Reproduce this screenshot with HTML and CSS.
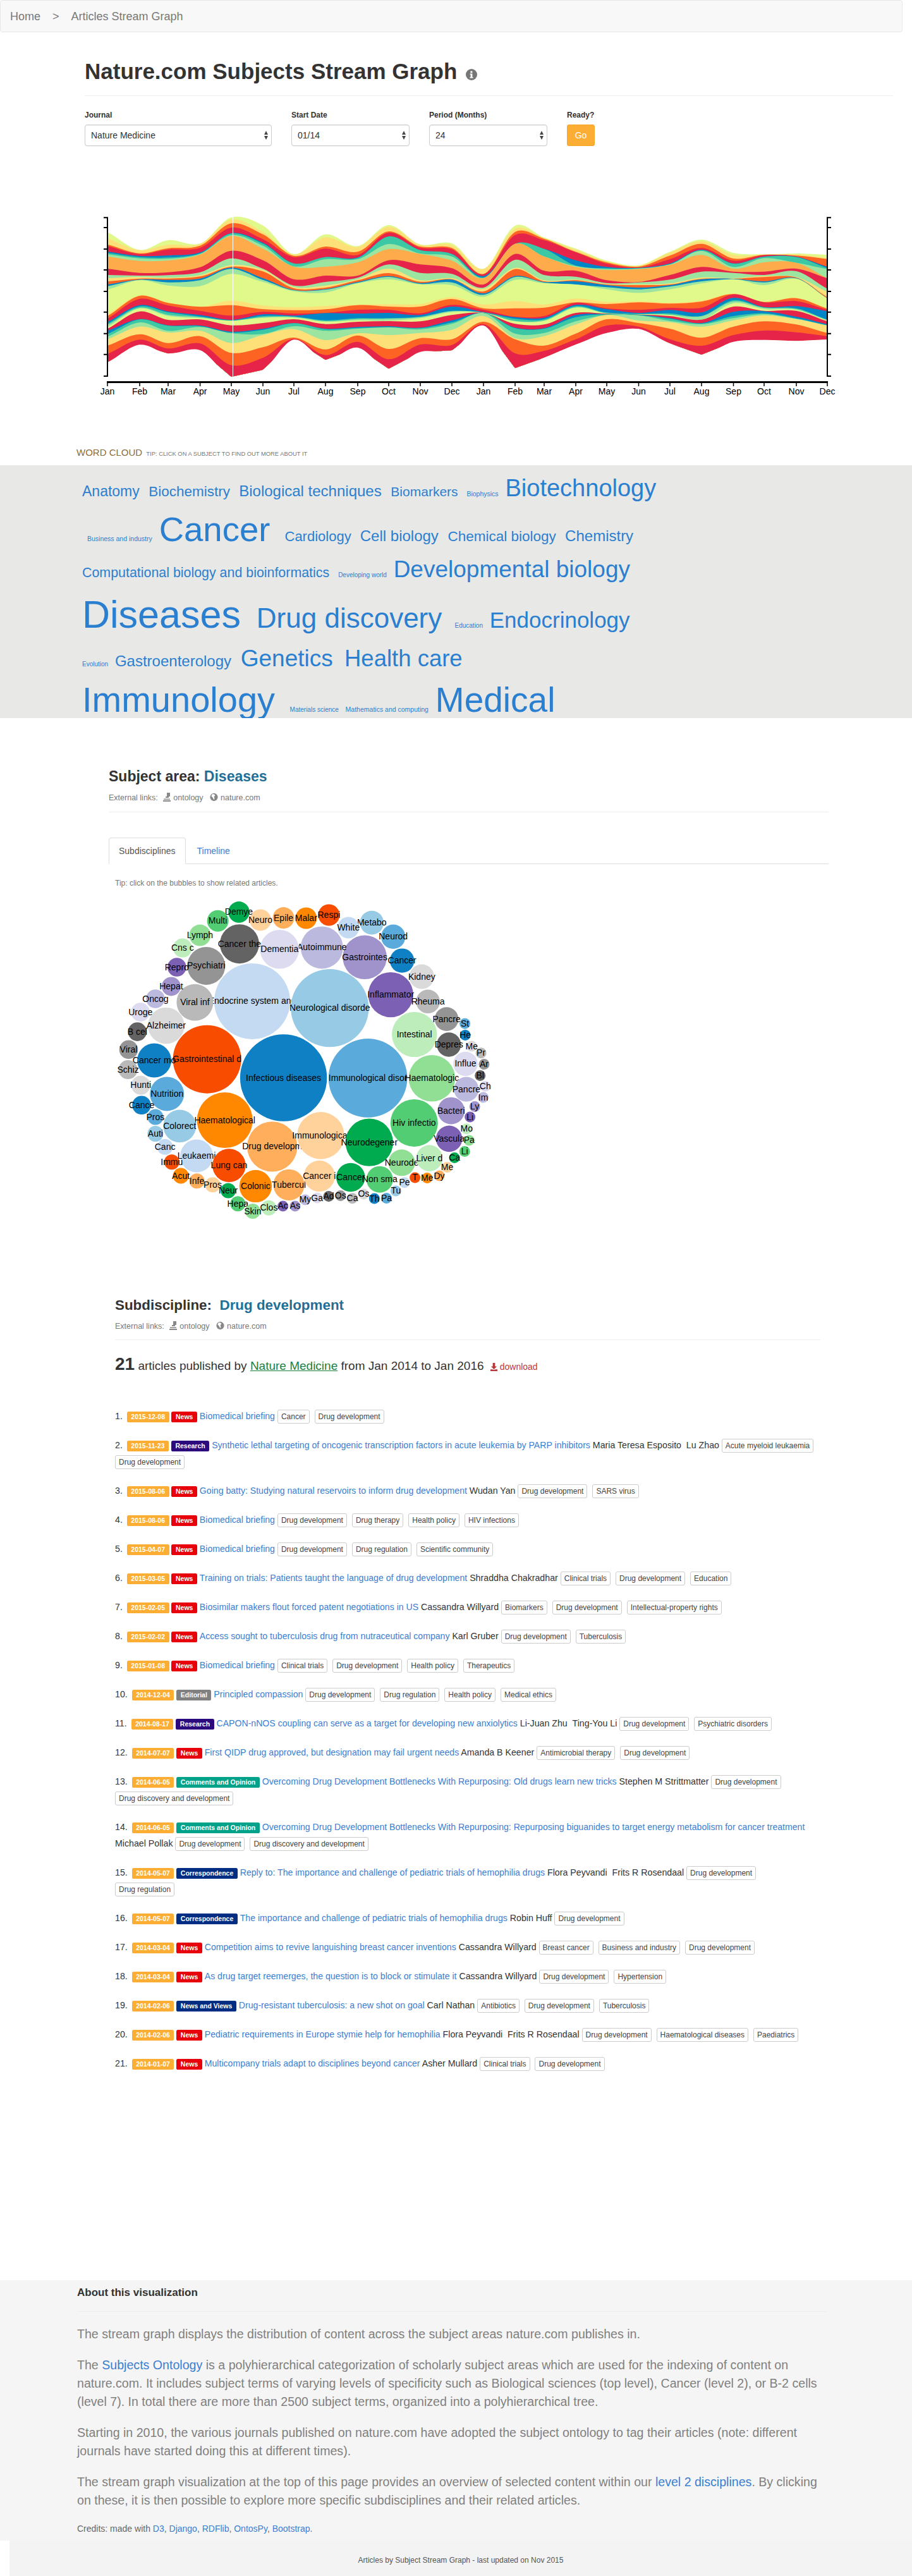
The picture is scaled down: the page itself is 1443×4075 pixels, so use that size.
FILE: index.html
```html
<!DOCTYPE html>
<html lang="en">
<head>
<meta charset="utf-8">
<title>Nature.com Subjects Stream Graph</title>
<link rel="stylesheet" href="styles.css">
</head>
<body>
<nav class="crumbs"><a>Home</a><span class="crumb-sep">&gt;</span><a>Articles Stream Graph</a></nav>

<header class="top">
  <h1 class="page-title">Nature.com Subjects Stream Graph
    <svg class="info-icon" viewBox="0 0 18 18" width="18" height="18"><circle cx="9" cy="9" r="9" fill="#777"/><path d="M7.4 3.6h3v2.6h-3zM6.6 7.4h3.8v5.6h1.2v1.6H6.4V13h1.2V9H6.6z" fill="#fff"/></svg>
  </h1>
  <form class="controls">
    <div class="field"><label class="field-label">Journal</label>
      <div class="select select-wide">Nature Medicine<svg class="updown" viewBox="0 0 8 16" width="8" height="16"><path d="M4 1l3 6H1zM4 15l3-6H1z" fill="#444"/></svg></div></div>
    <div class="field"><label class="field-label">Start Date</label>
      <div class="select">01/14<svg class="updown" viewBox="0 0 8 16" width="8" height="16"><path d="M4 1l3 6H1zM4 15l3-6H1z" fill="#444"/></svg></div></div>
    <div class="field"><label class="field-label">Period (Months)</label>
      <div class="select">24<svg class="updown" viewBox="0 0 8 16" width="8" height="16"><path d="M4 1l3 6H1zM4 15l3-6H1z" fill="#444"/></svg></div></div>
    <div class="field"><label class="field-label">Ready?</label>
      <button class="go" type="button">Go</button></div>
  </form>
  <svg id="stream" class="stream" viewBox="134 335 1200 300" width="1200" height="300"></svg>
</header>

<h4 class="cloud-title">WORD CLOUD <small class="cloud-tip">TIP: CLICK ON A SUBJECT TO FIND OUT MORE ABOUT IT</small></h4>
<section class="cloud">
  <div class="cloud-row r1"><a class="w23">Anatomy </a><a class="w225">Biochemistry </a><a class="w24">Biological techniques </a><a class="w21">Biomarkers </a><a class="w105">Biophysics </a><a class="w38">Biotechnology </a></div>
  <div class="cloud-row r2"><a class="w105">Business and industry </a><a class="w545">Cancer </a><a class="w22">Cardiology </a><a class="w24">Cell biology </a><a class="w225">Chemical biology </a><a class="w24">Chemistry </a></div>
  <div class="cloud-row r3"><a class="w215">Computational biology and bioinformatics </a><a class="w10">Developing world </a><a class="w37">Developmental biology </a></div>
  <div class="cloud-row r4"><a class="w61">Diseases </a><a class="w44">Drug discovery </a><a class="w10">Education </a><a class="w35">Endocrinology </a></div>
  <div class="cloud-row r5"><a class="w10">Evolution </a><a class="w24">Gastroenterology </a><a class="w37">Genetics </a><a class="w365">Health care </a></div>
  <div class="cloud-row r6"><a class="w56">Immunology </a><a class="w10">Materials science </a><a class="w105">Mathematics and computing </a><a class="w55">Medical </a></div>
</section>

<section class="subject">
  <h3 class="sub-title">Subject area: <a class="sub-link">Diseases</a></h3>
  <p class="ext-links">External links:
    <svg class="ico ico-first" viewBox="0 0 12 14" width="12" height="14"><path d="M6 0h5v6H9v2H4V6h2zM1 9.5h10V11H1zM0 12h12v2H0z" fill="#888"/></svg><a class="ext">ontology</a>
    <svg class="ico" viewBox="0 0 14 14" width="13" height="14"><circle cx="7" cy="7" r="6.6" fill="#888"/><path d="M5 1.5l3 1 1 2-2 1.5 1 2.5-1 3-1.5-2.5-1-2-2-1.5 1-2.5z" fill="#fff"/></svg><a class="ext">nature.com</a></p>
  <hr class="rule">
  <ul class="tabs"><li class="tab tab-active">Subdisciplines</li><li class="tab"><a>Timeline</a></li></ul>
  <p class="bubble-tip">Tip: click on the bubbles to show related articles.</p>
  <svg id="bubbles" class="bubbles" viewBox="172 1410 640 530" width="640" height="530"></svg>
</section>

<section class="articles">
  <h3 class="sub-title sub-title-alt">Subdiscipline: &nbsp;<a class="sub-link">Drug development</a></h3>
  <p class="ext-links">External links:
    <svg class="ico ico-first" viewBox="0 0 12 14" width="12" height="14"><path d="M6 0h5v6H9v2H4V6h2zM1 9.5h10V11H1zM0 12h12v2H0z" fill="#888"/></svg><a class="ext">ontology</a>
    <svg class="ico" viewBox="0 0 14 14" width="13" height="14"><circle cx="7" cy="7" r="6.6" fill="#888"/><path d="M5 1.5l3 1 1 2-2 1.5 1 2.5-1 3-1.5-2.5-1-2-2-1.5 1-2.5z" fill="#fff"/></svg><a class="ext">nature.com</a></p>
  <hr class="rule">
  <p class="count"><strong class="count-num">21</strong> articles published by <a class="journal">Nature Medicine</a> from Jan 2014 to Jan 2016 <a class="download"><svg class="dl-icon" viewBox="0 0 12 14" width="11" height="13"><path d="M4 0h4v6h3L6 11 1 6h3zM0 11h3l3 1 3-1h3v3H0z" fill="#b8383b"/></svg> download</a></p>

  <ol class="items">
    <li class="item"><span class="num">1.</span> <span class="lab date">2015-12-08</span> <span class="lab news">News</span> <a class="t">Biomedical briefing</a> <span class="tag">Cancer</span> <span class="tag">Drug development</span></li>
    <li class="item"><span class="num">2.</span> <span class="lab date">2015-11-23</span> <span class="lab research">Research</span> <a class="t">Synthetic lethal targeting of oncogenic transcription factors in acute leukemia by PARP inhibitors</a> Maria Teresa Esposito &nbsp;Lu Zhao <span class="tag">Acute myeloid leukaemia</span> <span class="tag">Drug development</span></li>
    <li class="item"><span class="num">3.</span> <span class="lab date">2015-08-06</span> <span class="lab news">News</span> <a class="t">Going batty: Studying natural reservoirs to inform drug development</a> Wudan Yan <span class="tag">Drug development</span> <span class="tag">SARS virus</span></li>
    <li class="item"><span class="num">4.</span> <span class="lab date">2015-08-06</span> <span class="lab news">News</span> <a class="t">Biomedical briefing</a> <span class="tag">Drug development</span> <span class="tag">Drug therapy</span> <span class="tag">Health policy</span> <span class="tag">HIV infections</span></li>
    <li class="item"><span class="num">5.</span> <span class="lab date">2015-04-07</span> <span class="lab news">News</span> <a class="t">Biomedical briefing</a> <span class="tag">Drug development</span> <span class="tag">Drug regulation</span> <span class="tag">Scientific community</span></li>
    <li class="item"><span class="num">6.</span> <span class="lab date">2015-03-05</span> <span class="lab news">News</span> <a class="t">Training on trials: Patients taught the language of drug development</a> Shraddha Chakradhar <span class="tag">Clinical trials</span> <span class="tag">Drug development</span> <span class="tag">Education</span></li>
    <li class="item"><span class="num">7.</span> <span class="lab date">2015-02-05</span> <span class="lab news">News</span> <a class="t">Biosimilar makers flout forced patent negotiations in US</a> Cassandra Willyard <span class="tag">Biomarkers</span> <span class="tag">Drug development</span> <span class="tag">Intellectual-property rights</span></li>
    <li class="item"><span class="num">8.</span> <span class="lab date">2015-02-02</span> <span class="lab news">News</span> <a class="t">Access sought to tuberculosis drug from nutraceutical company</a> Karl Gruber <span class="tag">Drug development</span> <span class="tag">Tuberculosis</span></li>
    <li class="item"><span class="num">9.</span> <span class="lab date">2015-01-08</span> <span class="lab news">News</span> <a class="t">Biomedical briefing</a> <span class="tag">Clinical trials</span> <span class="tag">Drug development</span> <span class="tag">Health policy</span> <span class="tag">Therapeutics</span></li>
    <li class="item"><span class="num">10.</span> <span class="lab date">2014-12-04</span> <span class="lab editorial">Editorial</span> <a class="t">Principled compassion</a> <span class="tag">Drug development</span> <span class="tag">Drug regulation</span> <span class="tag">Health policy</span> <span class="tag">Medical ethics</span></li>
    <li class="item"><span class="num">11.</span> <span class="lab date">2014-08-17</span> <span class="lab research">Research</span> <a class="t">CAPON-nNOS coupling can serve as a target for developing new anxiolytics</a> Li-Juan Zhu &nbsp;Ting-You Li <span class="tag">Drug development</span> <span class="tag">Psychiatric disorders</span></li>
    <li class="item"><span class="num">12.</span> <span class="lab date">2014-07-07</span> <span class="lab news">News</span> <a class="t">First QIDP drug approved, but designation may fail urgent needs</a> Amanda B Keener <span class="tag">Antimicrobial therapy</span> <span class="tag">Drug development</span></li>
    <li class="item"><span class="num">13.</span> <span class="lab date">2014-06-05</span> <span class="lab opinion">Comments and Opinion</span> <a class="t">Overcoming Drug Development Bottlenecks With Repurposing: Old drugs learn new tricks</a> Stephen M Strittmatter <span class="tag">Drug development</span> <span class="tag">Drug discovery and development</span></li>
    <li class="item"><span class="num">14.</span> <span class="lab date">2014-06-05</span> <span class="lab opinion">Comments and Opinion</span> <a class="t">Overcoming Drug Development Bottlenecks With Repurposing: Repurposing biguanides to target energy metabolism for cancer treatment</a> Michael Pollak <span class="tag">Drug development</span> <span class="tag">Drug discovery and development</span></li>
    <li class="item"><span class="num">15.</span> <span class="lab date">2014-05-07</span> <span class="lab corr">Correspondence</span> <a class="t">Reply to: The importance and challenge of pediatric trials of hemophilia drugs</a> Flora Peyvandi &nbsp;Frits R Rosendaal <span class="tag">Drug development</span> <span class="tag">Drug regulation</span></li>
    <li class="item"><span class="num">16.</span> <span class="lab date">2014-05-07</span> <span class="lab corr">Correspondence</span> <a class="t">The importance and challenge of pediatric trials of hemophilia drugs</a> Robin Huff <span class="tag">Drug development</span></li>
    <li class="item"><span class="num">17.</span> <span class="lab date">2014-03-04</span> <span class="lab news">News</span> <a class="t">Competition aims to revive languishing breast cancer inventions</a> Cassandra Willyard <span class="tag">Breast cancer</span> <span class="tag">Business and industry</span> <span class="tag">Drug development</span></li>
    <li class="item"><span class="num">18.</span> <span class="lab date">2014-03-04</span> <span class="lab news">News</span> <a class="t">As drug target reemerges, the question is to block or stimulate it</a> Cassandra Willyard <span class="tag">Drug development</span> <span class="tag">Hypertension</span></li>
    <li class="item"><span class="num">19.</span> <span class="lab date">2014-02-06</span> <span class="lab corr">News and Views</span> <a class="t">Drug-resistant tuberculosis: a new shot on goal</a> Carl Nathan <span class="tag">Antibiotics</span> <span class="tag">Drug development</span> <span class="tag">Tuberculosis</span></li>
    <li class="item"><span class="num">20.</span> <span class="lab date">2014-02-06</span> <span class="lab news">News</span> <a class="t">Pediatric requirements in Europe stymie help for hemophilia</a> Flora Peyvandi &nbsp;Frits R Rosendaal <span class="tag">Drug development</span> <span class="tag">Haematological diseases</span> <span class="tag">Paediatrics</span></li>
    <li class="item"><span class="num">21.</span> <span class="lab date">2014-01-07</span> <span class="lab news">News</span> <a class="t">Multicompany trials adapt to disciplines beyond cancer</a> Asher Mullard <span class="tag">Clinical trials</span> <span class="tag">Drug development</span></li>
  </ol>
</section>

<section class="about">
  <h4 class="about-title">About this visualization</h4>
  <hr class="rule">
  <p class="about-text">The stream graph displays the distribution of content across the subject areas nature.com publishes in.</p>
  <p class="about-text">The <a class="inline-link">Subjects Ontology</a> is a polyhierarchical categorization of scholarly subject areas which are used for the indexing of content on nature.com. It includes subject terms of varying levels of specificity such as Biological sciences (top level), Cancer (level 2), or B-2 cells (level 7). In total there are more than 2500 subject terms, organized into a polyhierarchical tree.</p>
  <p class="about-text">Starting in 2010, the various journals published on nature.com have adopted the subject ontology to tag their articles (note: different journals have started doing this at different times).</p>
  <p class="about-text">The stream graph visualization at the top of this page provides an overview of selected content within our <a class="inline-link">level 2 disciplines</a>. By clicking on these, it is then possible to explore more specific subdisciplines and their related articles.</p>
  <p class="credits">Credits: made with <a class="inline-link">D3</a>, <a class="inline-link">Django</a>, <a class="inline-link">RDFlib</a>, <a class="inline-link">OntosPy</a>, <a class="inline-link">Bootstrap</a>.</p>
</section>

<footer class="foot">Articles by Subject Stream Graph - last updated on Nov 2015</footer>
<script src="script.js"></script>
</body>
</html>
```
FILE: styles.css
```css
* { box-sizing: border-box; }
html, body { margin: 0; padding: 0; }
body { width: 1443px; overflow-x: hidden; font-family: "Liberation Sans", Arial, sans-serif; font-size: 14px; line-height: 20px; color: #333; background: #fff; }
a { color: #3a7ed2; text-decoration: none; }

.crumbs { width: 1428px; height: 51px; padding: 0 15px; display: flex; align-items: center; background: #f8f8f8; border: 1px solid #e7e7e7; border-radius: 4px; font-size: 18px; color: #777; }
.crumbs a { color: #777; }
.crumb-sep { margin: 0 19px; }

.top { padding-left: 134px; }
.page-title { margin: 42px 0 0; width: 1279px; height: 59px; border-bottom: 1px solid #eee; font-size: 35px; line-height: 39px; font-weight: 700; color: #333; }
.info-icon { margin-left: 4px; vertical-align: -2px; }

.controls { display: flex; gap: 31px; margin-top: 22px; }
.field { display: flex; flex-direction: column; }
.field-label { font-size: 12px; font-weight: 700; line-height: 17px; margin-bottom: 6px; }
.select { width: 187px; height: 34px; padding: 0 4px 0 9px; display: flex; align-items: center; justify-content: space-between; background: #fff; border: 1px solid #ccc; border-radius: 4px; box-shadow: inset 0 1px 1px rgba(0,0,0,.075), 0 1px 1px rgba(0,0,0,.05); }
.select-wide { width: 296px; }
.go { width: 44px; height: 34px; padding: 0; background: #fbae33; border: 1px solid #f5a623; border-radius: 3px; color: #fff; font: 14px "Liberation Sans", Arial, sans-serif; }

.stream { display: block; margin-top: 104px; }
.axis-text { font-size: 14px; fill: #000; text-anchor: middle; }

.cloud-title { margin: 71px 0 0; height: 30px; padding-left: 121px; font-size: 15px; line-height: 20px; font-weight: 400; color: #8a6d3b; }
.cloud-tip { font-size: 9.4px; color: #777; margin-left: 2px; }

.cloud { height: 400px; overflow: hidden; padding: 17px 0 0 130px; background: #e8e8e6; }
.cloud-row { font-size: 0; white-space: pre; }
.cloud-row a { line-height: 1; margin-right: 8px; color: #2b7fd0; }
.r1 { height: 58px; }
.r2 { height: 71px; padding-left: 8px; }
.r3 { height: 60px; }
.r4 { height: 81px; }
.r5 { height: 56px; }
.r6 { height: 57px; }
.w10 { font-size: 10px; }
.w105 { font-size: 10.5px; }
.w21 { font-size: 21px; }
.w215 { font-size: 21.4px; }
.w22 { font-size: 22px; }
.w225 { font-size: 22.5px; }
.w23 { font-size: 23px; }
.w24 { font-size: 24px; }
.w35 { font-size: 35px; }
.w365 { font-size: 36.5px; }
.w37 { font-size: 37px; }
.w38 { font-size: 38px; }
.w44 { font-size: 44px; }
.w545 { font-size: 54.5px; }
.w55 { font-size: 55px; }
.w56 { font-size: 56px; }
.w61 { font-size: 61px; }

.subject { margin: 80px 0 0 172px; width: 1139px; }
.sub-title { margin: 0; font-size: 23px; line-height: 25px; font-weight: 700; color: #333; }
.sub-title-alt { font-size: 22.4px; }
.sub-link { color: #1f6f97; }
.ext-links { margin: 13px 0 0; font-size: 12.5px; line-height: 17px; color: #777; }
.ext { color: #777; margin-left: 4px; }
.ico { vertical-align: -2px; margin-left: 7px; }
.ico-first { margin-left: 5px; }
.rule { margin: 13px 0 0; border: 0; border-top: 1px solid #eee; }

.tabs { display: flex; margin: 40px 0 0; padding: 0; height: 42px; list-style: none; border-bottom: 1px solid #ddd; }
.tab { height: 42px; padding: 10px 15px; margin-right: 2px; border: 1px solid transparent; border-radius: 4px 4px 0 0; }
.tab-active { border-color: #ddd #ddd #fff; color: #555; background: #fff; }
.bubble-tip { margin: 22px 0 0 10px; font-size: 12px; line-height: 17px; color: #777; }
.bubbles { display: block; margin-top: 4px; }
.bubble-label { font-size: 14px; fill: #000; text-anchor: middle; }

.articles { margin: 112px 0 0 182px; width: 1116px; }
.articles .rule { margin-top: 12px; }
.count { margin: 18px 0 0; font-size: 19px; line-height: 40px; color: #333; }
.count-num { font-size: 28px; font-weight: 700; }
.journal { color: #1b7f3f; text-decoration: underline; }
.download { font-size: 14px; color: #b8383b; margin-left: 5px; }
.dl-icon { vertical-align: -2px; }

.items { margin: 45px 0 0; padding: 0; list-style: none; }
.item { margin-bottom: 20px; font-size: 14.2px; line-height: 26px; }
.num { margin-right: 3px; }
.t { font-size: 14.1px; }
.lab { display: inline; padding: .2em .62em .3em; font-size: 10.5px; line-height: 1; font-weight: 700; color: #fff; border-radius: .25em; white-space: nowrap; }
.date { background: #fbae33; }
.news { background: #e8000b; }
.research { background: #2c0a7e; }
.editorial { background: #808080; }
.opinion { background: #00a38a; }
.corr { background: #002d84; }
.tag { display: inline-block; height: 22px; margin-right: 4px; padding: 0 5px; border: 1px solid #ccc; border-radius: 3px; font-size: 12px; line-height: 20px; color: #444; white-space: nowrap; }

.about { margin-top: 330px; height: 412px; padding: 10px 136px 0 122px; background: #f5f5f5; }
.about-title { margin: 0; font-size: 17px; line-height: 20px; font-weight: 700; color: #333; }
.about .rule { margin-top: 19px; }
.about-text { margin: 21px 0 0; font-size: 19.6px; line-height: 29px; color: #808080; }
.about-text + .about-text { margin-top: 20px; }
.credits { margin: 20px 0 0; font-size: 14px; line-height: 20px; color: #666; }

.foot { margin-left: 15px; height: 60px; padding-top: 21px; background: #f3f3f3; text-align: center; font-size: 12px; line-height: 20px; color: #555; }
```
FILE: script.js
```js
(function () {
  var NS = 'http://www.w3.org/2000/svg';
  function el(parent, name, attrs, text) {
    var node = document.createElementNS(NS, name);
    for (var k in attrs) node.setAttribute(k, attrs[k]);
    if (text) node.textContent = text;
    parent.appendChild(node);
    return node;
  }

  /* ---- stream graph ---- */
  var stream = document.getElementById('stream');
  var months = 'Jan Feb Mar Apr May Jun Jul Aug Sep Oct Nov Dec Jan Feb Mar Apr May Jun Jul Aug Sep Oct Nov Dec'.split(' ');
  var xs = [170,221,266,316.6,366,416,465,515,566,615,665,715,765,815,861,911,960,1010.5,1060,1110,1160.5,1209,1260,1309];
  var lime='#e0f98a',yel='#fee078',org='#fd6424',red='#e6244a',blu='#0086c6',tea='#3cc7a5',lgr='#9ce5a0',lor='#fdab4b';
  var colors = [lime,yel,org,red,blu,tea,lgr,lor,red,lgr,yel,org,blu,lgr,lime,yel,org,red,blu,tea,lgr,lime,red,blu,tea,lgr,yel,org,red];
  var colsA = [
    [172,202,230,238,264,270,277,287,345,375,390,405,420,428,445,562,570,582,598,606,612,622,630,640,655,668,680,710,750,790],
    [256,258,272,276,285,290,296,308,365,378,384,392,396,398,400,472,474,488,518,524,530,534,548,584,586,600,620,656,682,706],
    [210,232,248,254,282,292,298,306,362,376,388,392,398,410,425,506,508,520,548,552,564,570,588,614,616,640,648,698,724,748],
    [226,228,236,246,268,272,275,278,338,362,376,382,392,400,428,526,526,545,565,572,575,580,586,615,618,622,640,665,700,732],
    [102,112,130,150,176,178,186,190,260,296,328,335,340,346,370,497,518,568,588,590,592,592,614,644,648,652,698,745,803,858],
    [140,170,182,205,222,226,236,250,305,345,350,358,390,398,408,520,537,550,562,570,575,578,603,630,635,655,660,718,768,825],
    [276,278,284,290,320,320,334,336,395,425,432,438,446,448,452,528,542,558,568,572,574,578,585,604,604,618,632,672,678,682],
    [182,196,240,250,290,290,300,336,378,408,425,435,442,445,458,522,538,555,556,590,594,597,608,630,632,640,684,728,755,778],
    [238,242,265,280,292,294,300,315,378,388,395,400,408,412,415,516,518,540,558,580,584,590,597,622,626,630,652,662,692,720],
    [138,146,168,174,192,192,228,252,305,325,345,366,380,384,396,514,525,540,555,580,583,592,594,618,622,624,660,726,775,820]
  ];
  var colsB = [
    [155,157,165,170,182,182,198,200,250,290,325,332,338,342,345,438,450,482,490,498,500,505,520,550,552,558,575,600,630,665],
    [150,158,172,178,200,200,212,232,268,295,315,320,322,335,348,405,414,442,450,470,472,476,490,515,525,532,560,605,632,658],
    [270,272,295,297,305,312,314,315,345,360,365,378,387,394,403,440,458,465,476,478,479,479,480,480,480,481,495,522,533,540],
    [66,80,96,110,152,152,152,152,200,228,266,272,305,310,323,424,458,498,500,508,518,520,532,550,552,578,600,605,672,742],
    [122,126,128,135,176,176,212,212,280,300,325,330,333,336,340,440,455,495,503,510,515,518,535,552,555,575,590,635,660,692],
    [175,180,190,192,230,255,258,262,280,308,322,325,330,345,345,412,430,432,442,448,452,455,480,490,500,520,535,578,605,630],
    [232,236,240,246,262,268,272,276,325,338,342,345,348,358,368,428,438,458,462,478,482,482,484,485,486,490,490,510,540,575],
    [254,256,260,265,266,268,270,272,333,335,345,348,360,368,385,425,430,465,480,484,486,486,488,488,490,492,516,528,545,556],
    [190,194,208,225,245,248,250,252,300,322,340,345,348,355,368,432,436,456,466,482,488,490,495,505,508,518,524,555,605,625],
    [132,140,152,172,180,182,186,205,262,284,312,318,320,330,340,422,426,455,478,494,496,512,512,528,530,534,546,598,636,678],
    [195,205,222,232,245,246,262,270,284,290,315,318,318,320,320,388,390,392,408,420,426,434,450,475,495,505,515,545,585,617],
    [202,204,204,206,212,214,220,240,284,300,305,310,330,335,348,428,428,430,452,454,456,462,470,472,482,486,492,520,564,608],
    [198,202,208,212,214,215,242,242,270,282,310,312,314,316,318,408,410,424,448,458,462,466,470,498,506,508,510,535,572,613],
    [204,220,224,260,262,268,272,315,316,365,380,405,410,410,412,458,460,466,472,512,514,516,520,534,538,540,540,575,590,606]
  ];
  var rows = colsA.map(function (c) { return c.map(function (z) { return 310 + z / 3; }); })
    .concat(colsB.map(function (c) { return c.map(function (z) { return 335 + z / 3; }); }));

  function f(n) { return n.toFixed(1); }
  function curve(b) {
    var ys = rows.map(function (r) { return r[b]; });
    function slope(i) {
      var a = Math.max(i - 1, 0), c = Math.min(i + 1, ys.length - 1);
      return 0.9 * (ys[c] - ys[a]) / (xs[c] - xs[a]);
    }
    var s = '';
    for (var i = 0; i < ys.length - 1; i++) {
      var dx = (xs[i + 1] - xs[i]) / 3;
      s += 'C' + f(xs[i] + dx) + ',' + f(ys[i] + slope(i) * dx) + ' ' + f(xs[i + 1] - dx) + ',' + f(ys[i + 1] - slope(i + 1) * dx) + ' ' + f(xs[i + 1]) + ',' + f(ys[i + 1]);
    }
    return 'M' + f(xs[0]) + ',' + f(ys[0]) + s;
  }
  var bottom = rows.map(function (r) { return r[29]; });
  var bottomPath = curve(29);
  colors.forEach(function (color, i) {
    /* each layer is filled from its top edge down to the stream's bottom edge; later layers paint over it */
    var back = '';
    for (var k = xs.length - 1; k >= 0; k--) back += 'L' + f(xs[k]) + ',' + f(bottom[k]);
    el(stream, 'path', { d: curve(i) + back + 'Z', fill: color });
  });
  el(stream, 'path', { d: bottomPath + 'V640H170Z', fill: '#fff' });
  el(stream, 'rect', { x: 368, y: 343, width: 1, height: 265, fill: '#fff' });

  var ticksY = [344.3,360,394,427,461,493.7,527.7,560.7,595];
  var ax = { fill: 'none', stroke: '#000', 'stroke-width': 2 };
  var left = 'M170,344V595', right = 'M1309,344V595';
  ticksY.forEach(function (y) { left += 'M164,' + y + 'H171'; right += 'M1308,' + y + 'H1315'; });
  el(stream, 'path', Object.assign({ d: left }, ax));
  el(stream, 'path', Object.assign({ d: right }, ax));
  el(stream, 'path', { d: 'M169,604.5H1310', fill: 'none', stroke: '#000', 'stroke-width': 3 });
  xs.forEach(function (x, i) {
    el(stream, 'path', { d: 'M' + x + ',604V611', fill: 'none', stroke: '#000', 'stroke-width': 1.5 });
    el(stream, 'text', { x: x, y: 624, 'class': 'axis-text' }, months[i]);
  });

  /* ---- bubble chart: label, x, y, radius (largest first, so later bubbles cover earlier labels) ---- */
  var pal = ['#0f80c4','#5aabdb','#96cae5','#c3daf2','#f84d00','#ff8800','#ffae5c','#ffd19b','#00ab50','#52cd74','#90df94','#bdedbb','#7b60b4','#a093cb','#bcb9df','#dcdbef','#636363','#949494','#b9b9b9','#dadada'];
  var b = [
    ['Endocrine system and',625,515,60,3],['Immunological disor',1035,855,62.3,1],['Neurological disorde',900,545,61.6,2],['Infectious diseases',736,854,68.7,0],
    ['Gastrointestinal d',465,772,54,4],['Haematological',528,1042,44,5],['Drug developm',696,1159,39.7,6],['Immunological',868,1110,37.3,7],['Neurodegener',1040,1140,37.7,8],['Hiv infectio',1199,1054,37.5,9],['Haematologic',1262,856,36.8,10],['Intestinal',1200,662,35.7,11],['Inflammator',1116,486,35.7,12],['Gastrointes',1024,320,34.8,13],['Autoimmune',872,277,33.5,14],['Dementia',722,285,30.8,15],['Cancer the',580,261,31,16],['Psychiatri',462,358,30,17],['Viral inf',422,520,29,18],['Alzheimer',320,623,28.8,19],['Cancer mo',278,777,27,0],['Nutrition',323,925,27,1],['Colorect',368,1068,25.9,2],['Leukaemi',428,1200,26,3],['Lung can',543,1242,26.3,4],['Colonic',637,1334,25.7,5],['Tubercul',755,1328,24.6,6],['Cancer i',863,1289,24.6,7],['Cancer',974,1295,22.8,8],['Non sma',1077,1304,21,9],['Neurode',1155,1230,21,10],['Liver d',1253,1210,20.8,11],['Vascula',1323,1124,20.8,12],['Bacteri',1330,1000,21.4,13],['Pancre',1384,905,19.6,14],['Influe',1381,792,19.2,15],['Depres',1322,707,19.2,16],['Pancre',1314,594,18.8,17],['Rheuma',1248,516,18.8,18],['Kidney',1226,406,19.6,19],['Cancer',1156,335,19.2,0],['Neurod',1125,229,19.2,1],['Metabo',1049,167,18.8,2],['White',966,189,17,3],['Respi',897,133,17,4],['Malar',816,147,17,5],['Epile',736,146,17,6],['Neuro',654,155,17,7],['Demye',578,120,16.8,8],['Multi',503,159,17,9],['Lymph',440,223,17,10],['Cns c',378,279,15,11],['Repro',358,364,14.8,12],['Hepat',338,449,15,13],['Oncog',282,504,14.8,14],['Uroge',229,563,14.8,15],['B cel',218,650,14.8,16],['Viral',187,729,14.8,17],['Schiz',185,818,15,18],['Hunti',230,887,15,19],['Cance',233,975,14.8,0],['Pros',282,1028,12.5,1],['Auti',282,1102,12.5,2],['Canc',316,1160,12.5,3],['Immu',340,1227,12,4],['Acut',372,1288,12.5,5],['Infe',429,1311,12,6],['Pros',485,1328,12,7],['Neur',540,1354,12,8],['Hepa',574,1412,12,9],['Skin',627,1445,12,10],['Clos',684,1430,12,11],['Ac',734,1422,8.5,12],['As',777,1422,8.5,13],['My',813,1394,8.5,14],['Ga',855,1386,8.5,15],['Ad',896,1379,8.5,16],['Os',938,1376,8.5,17],['Ca',980,1388,8.5,18],['Os',1020,1369,8.5,19],['Th',1058,1389,8.5,0],['Pa',1101,1387,8.5,1],['Tu',1134,1355,8.5,2],['Pe',1165,1318,8.5,3],['T',1202,1296,8.5,4],['Me',1245,1298,8.5,5],['Dy',1288,1288,8.5,6],['Me',1316,1250,8.5,7],['Ca',1342,1208,8.5,8],['Li',1378,1180,8.5,9],['Pa',1394,1131,8.5,10],['Mo',1385,1080,8.5,11],['Li',1397,1028,8.5,12],['Ly',1414,981,8.5,13],['Im',1444,941,8.5,14],['Ch',1451,892,8.5,15],['Bl',1433,844,8.5,16],['Ar',1447,794,8.5,17],['Pr',1436,744,8.5,18],['Me',1403,714,8.5,19],['He',1380,665,8.5,0],['St',1379,614,8.5,1]
  ];
  var svg = document.getElementById('bubbles');
  b.forEach(function (d) {
    var cx = 120 + d[1] / 2.24, cy = 1400 + d[2] / 2.8;
    var g = el(svg, 'g', {});
    el(g, 'circle', { cx: cx.toFixed(1), cy: cy.toFixed(1), r: d[3], fill: pal[d[4]] });
    el(g, 'text', { x: cx.toFixed(1), y: (cy + 4.5).toFixed(1), 'class': 'bubble-label' }, d[0]);
  });
})();
```
